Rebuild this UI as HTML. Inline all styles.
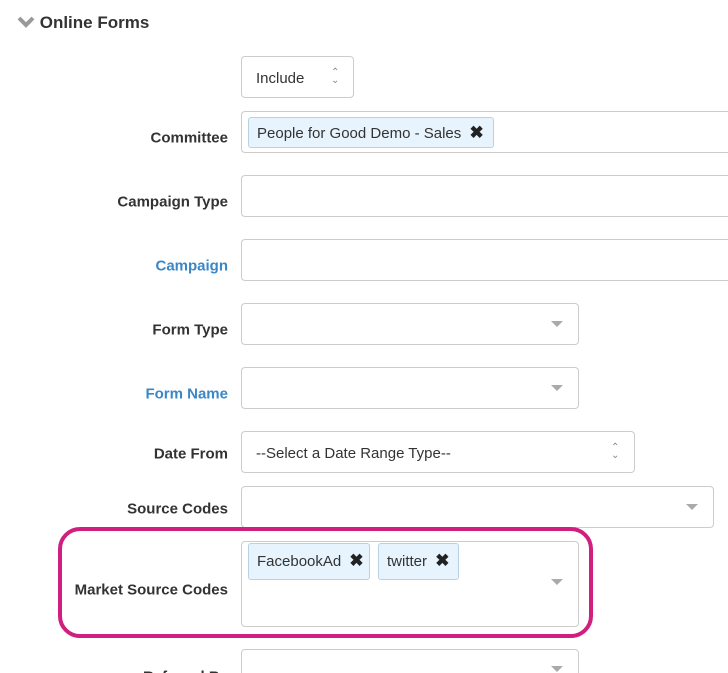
<!DOCTYPE html>
<html><head><style>
html,body{margin:0;width:728px;height:673px;overflow:hidden}
body{background:#fff;font-family:"Segoe UI","Liberation Sans",sans-serif;position:relative;color:#333}
.a{position:absolute}
.lbl{position:absolute;right:500px;font-size:15px;font-weight:bold;color:#333;white-space:nowrap;transform:translateY(-50%)}
.blue{color:#3a87c8}
.box{position:absolute;border:1px solid #ccc;border-radius:4px;background:#fff;box-sizing:border-box}
.tag{position:absolute;background:#e8f4fd;border:1px solid #b9d2e3;border-radius:3px;box-sizing:border-box;font-size:15px;color:#333;padding:6px 8px;white-space:nowrap}
.tag b{font-size:17px;margin-left:4px;color:#222}
.arr{position:absolute;width:0;height:0;border-left:6px solid transparent;border-right:6px solid transparent;border-top:6px solid #aaa}
.sp{position:absolute;font-size:10px;color:#888;line-height:8px}
</style></head><body>
<div class="a" style="left:17px;top:13px;font-size:17px;font-weight:bold;color:#333"><svg width="18" height="14" style="vertical-align:-1px" viewBox="0 0 18 14"><path d="M2 3 L9 10 L16 3" stroke="#999" stroke-width="4" fill="none"/></svg> Online Forms</div>

<div class="box" style="left:241px;top:56px;width:113px;height:42px"><span class="a" style="left:14px;top:13px;font-size:15px">Include</span><span class="sp" style="left:89px;top:12px">⌃<br>⌄</span></div>

<div class="lbl" style="top:138px">Committee</div>
<div class="box" style="left:241px;top:111px;width:500px;height:42px"></div>
<div class="tag" style="left:248px;top:117px;width:246px;height:31px;padding-top:5px">People for Good Demo - Sales <b>✖</b></div>

<div class="lbl" style="top:202px">Campaign Type</div>
<div class="box" style="left:241px;top:175px;width:500px;height:42px"></div>

<div class="lbl blue" style="top:266px">Campaign</div>
<div class="box" style="left:241px;top:239px;width:500px;height:42px"></div>

<div class="lbl" style="top:330px">Form Type</div>
<div class="box" style="left:241px;top:303px;width:338px;height:42px"></div>
<div class="arr" style="left:551px;top:321px"></div>

<div class="lbl blue" style="top:394px">Form Name</div>
<div class="box" style="left:241px;top:367px;width:338px;height:42px"></div>
<div class="arr" style="left:551px;top:385px"></div>

<div class="lbl" style="top:454px">Date From</div>
<div class="box" style="left:241px;top:431px;width:394px;height:42px"><span class="a" style="left:14px;top:13px;font-size:15px">--Select a Date Range Type--</span><span class="sp" style="left:369px;top:12px">⌃<br>⌄</span></div>

<div class="lbl" style="top:509px">Source Codes</div>
<div class="box" style="left:241px;top:486px;width:473px;height:42px"></div>
<div class="arr" style="left:686px;top:504px"></div>

<div class="a" style="left:58px;top:527px;width:535px;height:111px;border:4px solid #d01f7e;border-radius:22px;box-sizing:border-box"></div>
<div class="lbl" style="top:590px">Market Source Codes</div>
<div class="box" style="left:241px;top:541px;width:338px;height:86px"></div>
<div class="tag" style="left:248px;top:543px;width:122px;height:37px;padding-top:7px">FacebookAd <b>✖</b></div>
<div class="tag" style="left:378px;top:543px;width:81px;height:37px;padding-top:7px">twitter <b>✖</b></div>
<div class="arr" style="left:551px;top:579px"></div>

<div class="lbl" style="top:677px">Referred By</div>
<div class="box" style="left:241px;top:649px;width:338px;height:42px"></div>
<div class="arr" style="left:551px;top:666px"></div>
</body></html>
